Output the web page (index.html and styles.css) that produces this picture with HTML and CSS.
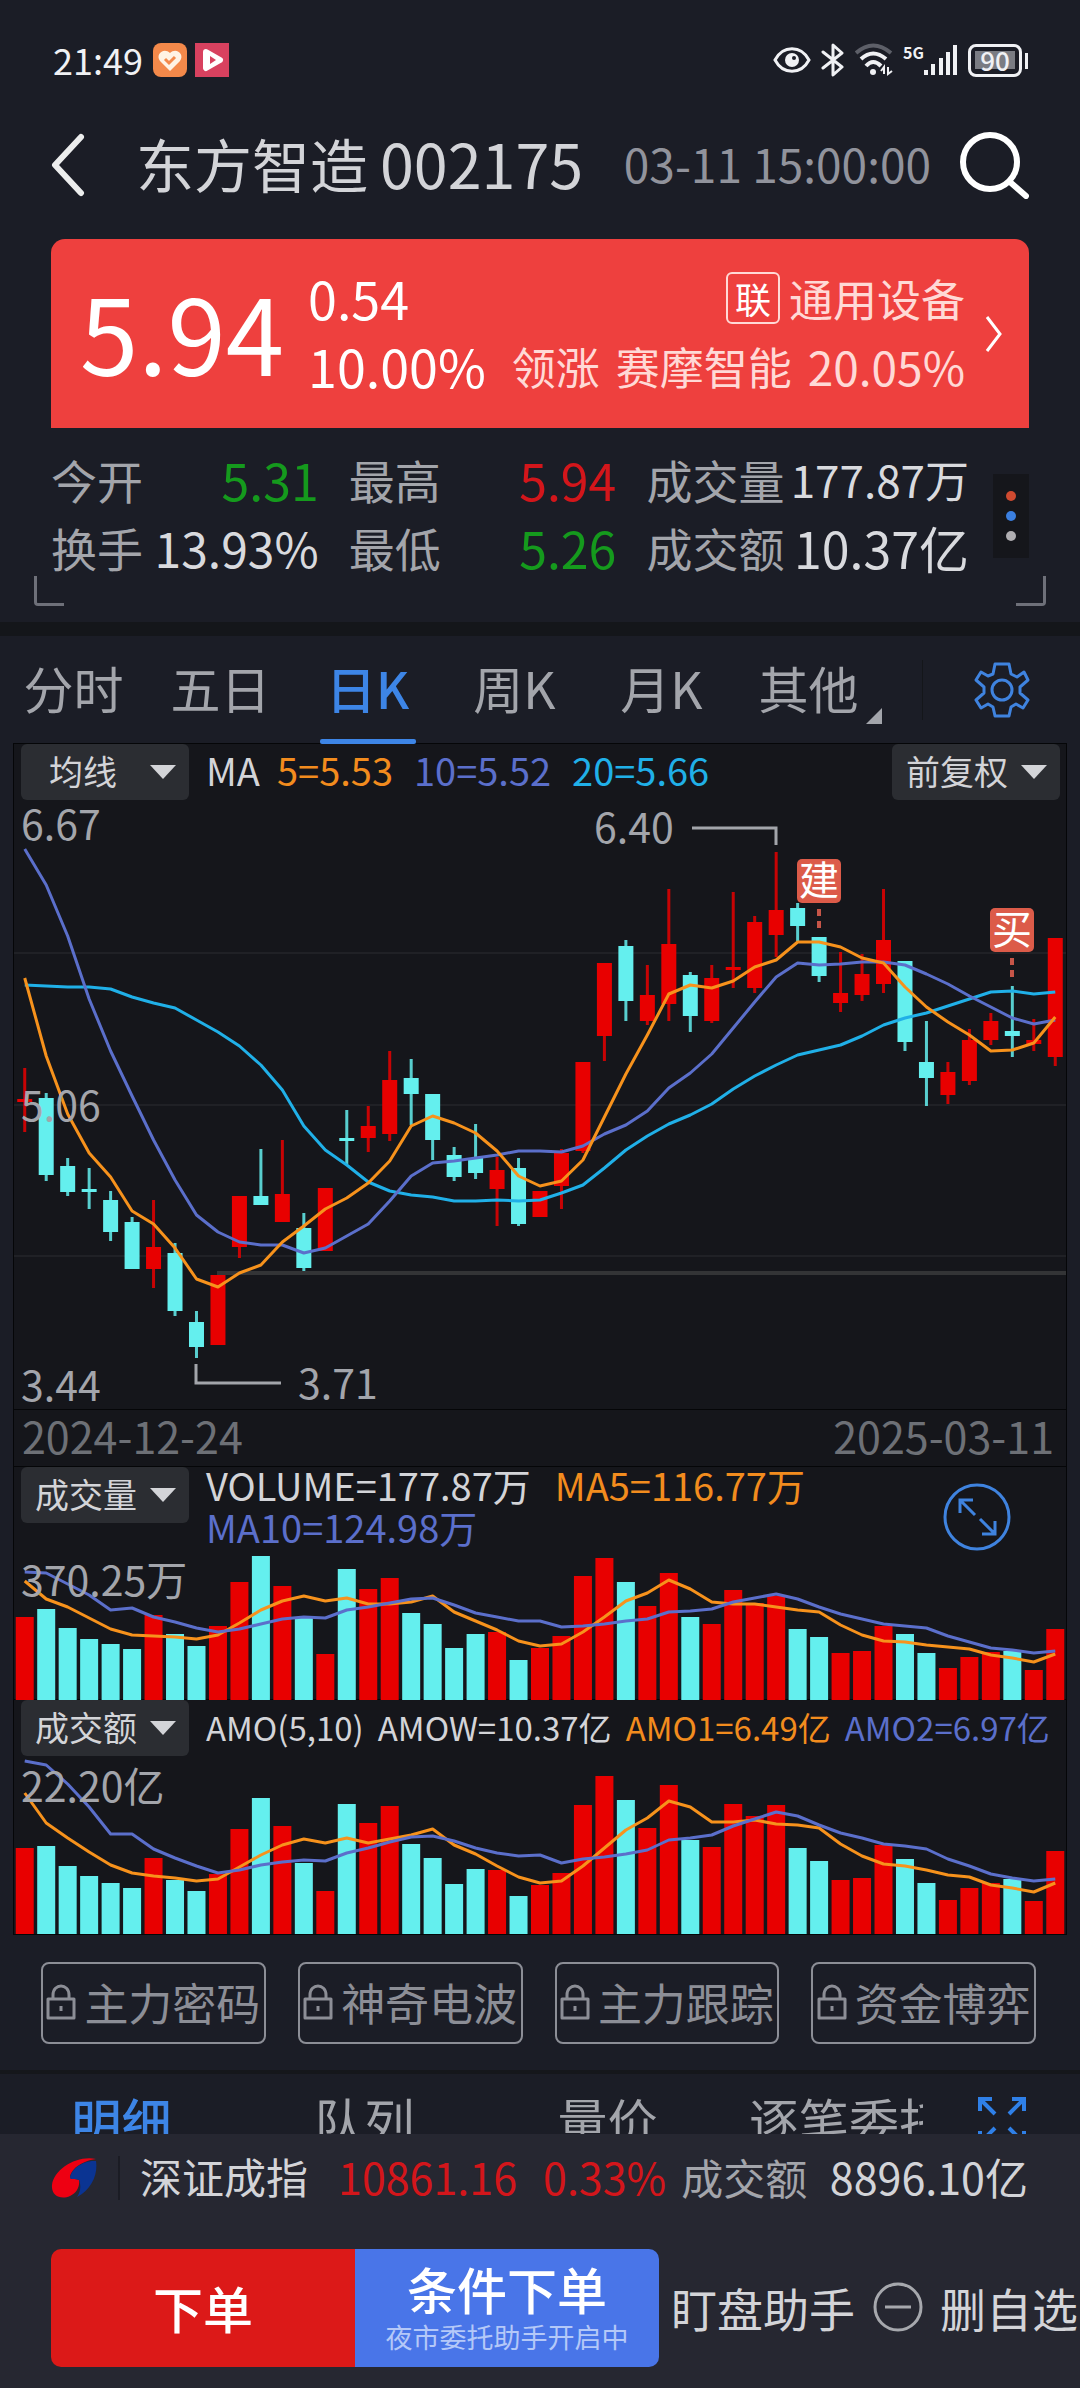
FILE: index.html
```
<!DOCTYPE html>
<html lang="zh-CN">
<head>
<meta charset="UTF-8">
<meta name="viewport" content="width=device-width, initial-scale=1.0">
<title>东方智造 002175</title>
<link rel="stylesheet" href="styles.css">
</head>
<body>

<div class="status-bar">
    <span class="time">21:49</span>
    <svg class="app-icon" width="34" height="34" viewBox="0 0 34 34">
        <rect width="34" height="34" rx="8" fill="#f4894a"/>
        <path d="M17 28 L7 18 C2 11 11 4 17 10 C23 4 32 11 27 18 Z" fill="#fff3e4"/>
        <path d="M12 16 L16 20 L22 14" fill="none" stroke="#f4894a" stroke-width="3"/>
    </svg>
    <svg width="34" height="34" viewBox="0 0 34 34">
        <rect width="34" height="34" fill="#d8415f"/>
        <path d="M11 9 L25 17 L11 25 Z" fill="#fff" stroke="#fff" stroke-width="6" stroke-linejoin="round"/>
        <path d="M15 13 L21 17 L15 21 Z" fill="#d8415f"/>
    </svg>
    <div class="status-right">
        <svg width="38" height="26" viewBox="0 0 38 26">
            <path d="M2 13 C10 -2 28 -2 36 13 C28 28 10 28 2 13 Z" fill="none" stroke="#f0f1f4" stroke-width="3"/>
            <circle cx="19" cy="13" r="7" fill="#f0f1f4"/>
            <circle cx="21" cy="11" r="2" fill="#1b1d26"/>
        </svg>
        <svg width="24" height="34" viewBox="0 0 24 34">
            <path d="M2 9 L21 24 L12 32 V2 L21 10 L2 25" fill="none" stroke="#f0f1f4" stroke-width="3" stroke-linejoin="round" stroke-linecap="round"/>
        </svg>
        <svg width="38" height="34" viewBox="0 0 38 34">
            <g fill="none" stroke-width="4">
                <path d="M1 10 Q18 -5 36 10" stroke="#5d5f68"/>
                <path d="M6 16 Q18 5 31 16" stroke="#f0f1f4"/>
                <path d="M11 23 Q18 15 26 23" stroke="#f0f1f4"/>
            </g>
            <circle cx="18" cy="29" r="3" fill="#f0f1f4"/>
            <path d="M29 31 V24 L26 28 M33 24 V31 L37 28" fill="none" stroke="#f0f1f4" stroke-width="2"/>
        </svg>
        <div class="signal">
            <span>5G</span>
            <svg width="34" height="32" viewBox="0 0 34 32">
                <path d="M2 26 V31 M9 20 V31 M17 14 V31 M24 8 V31 M31 1 V31" stroke="#f0f1f4" stroke-width="4"/>
            </svg>
        </div>
        <div class="battery"><span>90</span></div>
    </div>
</div>

<main class="content">
    <header class="header">
        <button class="icon-button" aria-label="返回">
            <svg width="36" height="64" viewBox="0 0 36 64"><path d="M31 4 L5 32 L31 60" fill="none" stroke="#eceded" stroke-width="6" stroke-linecap="round" stroke-linejoin="round"/></svg>
        </button>
        <h1>东方智造 <span>002175</span></h1>
        <time>03-11 15:00:00</time>
        <button class="icon-button" aria-label="搜索">
            <svg width="70" height="68" viewBox="0 0 70 68"><circle cx="31" cy="31" r="27" fill="none" stroke="#fff" stroke-width="6"/><path d="M51 51 L67 65" stroke="#fff" stroke-width="6" stroke-linecap="round"/></svg>
        </button>
    </header>

    <section class="price-card">
        <strong>5.94</strong>
        <div class="change">
            <div>0.54</div>
            <div>10.00%</div>
        </div>
        <a class="sector" href="#">
            <span class="sector-row"><span class="badge">联</span>通用设备</span>
            <span class="sector-row leader"><span>领涨</span><span>赛摩智能</span><span class="leader-change">20.05%</span></span>
        </a>
        <svg width="18" height="38" viewBox="0 0 18 38"><path d="M2 2 L15 19 L2 36" fill="none" stroke="#fff" stroke-width="3"/></svg>
    </section>

    <section class="stats">
        <div class="stat-col">
            <div class="stat"><span>今开</span><b class="green large">5.31</b></div>
            <div class="stat"><span>换手</span><b>13.93%</b></div>
        </div>
        <div class="stat-col">
            <div class="stat"><span>最高</span><b class="red large">5.94</b></div>
            <div class="stat"><span>最低</span><b class="green large">5.26</b></div>
        </div>
        <div class="stat-col wide">
            <div class="stat"><span>成交量</span><b class="small">177.87万</b></div>
            <div class="stat"><span>成交额</span><b class="large">10.37亿</b></div>
        </div>
        <button class="dots" aria-label="更多"><i></i><i></i><i></i></button>
    </section>
    <div class="corners"><i></i><i></i></div>

    <nav class="tabs">
        <button>分时</button>
        <button>五日</button>
        <button class="active">日K</button>
        <button>周K</button>
        <button>月K</button>
        <button class="more">其他</button>
        <div class="settings">
            <button class="icon-button" aria-label="设置">
                <svg width="56" height="56" viewBox="-28 -28 56 56" fill="none" stroke="#3f83df" stroke-width="3" stroke-linejoin="round">
                    <path d="M-7 -26 H7 L9 -16 L15 -13 L22 -18 L26 -10 L18 -3 V3 L26 10 L21 18 L14 14 L9 17 L7 26 H-7 L-9 17 L-14 14 L-21 18 L-26 10 L-18 3 V-3 L-26 -10 L-21 -18 L-14 -14 L-9 -16 Z"/>
                    <circle r="10"/>
                </svg>
            </button>
        </div>
    </nav>

    <section class="charts">
        <div class="panel">
            <div class="panel-head">
                <label class="select short"><select aria-label="指标"><option>均线</option></select></label>
                <div class="legend"><span>MA</span><span class="orange">5=5.53</span><span class="violet ma10">10=5.52</span><span class="cyan">20=5.66</span></div>
                <label class="select"><select aria-label="复权"><option>前复权</option></select></label>
            </div>
            <svg id="priceChart" class="chart" viewBox="0 0 1052 607"></svg>
        </div>
        <div class="dates"><span>2024-12-24</span><span>2025-03-11</span></div>
        <div class="panel">
            <div class="panel-head tall">
                <label class="select"><select aria-label="副图一"><option>成交量</option></select></label>
                <div class="legend two-lines"><span>VOLUME=177.87万</span><span class="orange">MA5=116.77万</span><span class="violet">MA10=124.98万</span></div>
                <button class="icon-button zoom" aria-label="放大">
                    <svg width="70" height="70" viewBox="0 0 70 70" fill="none" stroke="#3f83df" stroke-width="3">
                        <circle cx="35" cy="35" r="32"/>
                        <path d="M33 33 L18 18 M18 31 V18 H31 M38 37 L53 52 M53 39 V52 H40"/>
                    </svg>
                </button>
            </div>
            <svg id="volumeChart" class="chart" viewBox="0 0 1052 154"></svg>
        </div>
        <div class="panel">
            <div class="panel-head">
                <label class="select"><select aria-label="副图二"><option>成交额</option></select></label>
                <div class="legend amo"><span>AMO(5,10)</span><span>AMOW=10.37亿</span><span class="orange">AMO1=6.49亿</span><span class="violet">AMO2=6.97亿</span></div>
            </div>
            <svg id="amountChart" class="chart" viewBox="0 0 1052 176"></svg>
        </div>
    </section>

    <svg class="defs" width="0" height="0">
        <symbol id="lock" viewBox="0 0 30 36">
            <path d="M2 15 H28 V34 H2 Z M7 15 V11 C7 -1 23 -1 23 11 V15 M15 22 V27" fill="none" stroke="#8c8e96" stroke-width="3" stroke-linejoin="round"/>
        </symbol>
    </svg>
    <section class="locked">
        <button><svg width="30" height="36"><use href="#lock"/></svg>主力密码</button>
        <button><svg width="30" height="36"><use href="#lock"/></svg>神奇电波</button>
        <button><svg width="30" height="36"><use href="#lock"/></svg>主力跟踪</button>
        <button><svg width="30" height="36"><use href="#lock"/></svg>资金博弈</button>
    </section>

    <nav class="detail-tabs">
        <button class="active">明细</button>
        <button>队列</button>
        <button>量价</button>
        <button class="last">逐笔委托</button>
        <div class="expand">
            <svg width="48" height="48" viewBox="0 0 48 48" fill="none" stroke="#2f80e8" stroke-width="4">
                <path d="M2 14 V2 H14 M2 2 L17 17 M34 2 H46 V14 M46 2 L31 17 M2 34 V46 H14 M2 46 L17 31 M34 46 H46 V34 M46 46 L31 31"/>
            </svg>
        </div>
    </nav>
</main>

<footer class="footer">
    <div class="index-row">
        <svg width="46" height="42" viewBox="0 0 46 42">
            <path d="M45 2 C26 -2 3 12 1 28 C0 39 10 43 19 39 C26 36 29 29 28 23 C24 21 21 23 19 21 C19 13 30 4 45 2 Z" fill="#ee0012"/>
            <path d="M45 4 C47 17 41 32 26 40 C30 34 30 28 28 23 C24 21 21 23 19 21 C20 12 32 3 45 4 Z" fill="#0b3492"/>
        </svg>
        <span class="index-name">深证成指</span>
        <span class="red">10861.16</span>
        <span class="red percent">0.33%</span>
        <span class="muted">成交额</span>
        <span class="turnover">8896.10亿</span>
    </div>
    <div class="actions">
        <button class="order">下单</button>
        <button class="condition">条件下单<small>夜市委托助手开启中</small></button>
        <button class="plain watch">盯盘助手</button>
        <button class="plain remove">
            <svg width="50" height="50" viewBox="0 0 50 50" fill="none" stroke="#a6a8ad" stroke-width="3"><circle cx="25" cy="25" r="23"/><path d="M12 25 H38"/></svg>
            删自选
        </button>
    </div>
</footer>

<script src="charts.js"></script>
</body>
</html>
```
FILE: styles.css
```
* {
    box-sizing: border-box;
}
body {
    display: flex;
    flex-direction: column;
    height: 100vh;
    margin: 0;
    overflow: hidden;
    background-color: #1b1d26;
    color: #d3d4d8;
    font-family: "Noto Sans CJK SC", "Noto Sans", sans-serif;
}
button,
select {
    margin: 0;
    padding: 0;
    border: 0;
    background: none;
    color: inherit;
    font: inherit;
    white-space: nowrap;
    cursor: pointer;
}
svg {
    display: block;
    flex-shrink: 0;
}
.icon-button {
    flex-shrink: 0;
}
.red {
    color: #d3161b;
}
.green {
    color: #159a1d;
}
.orange {
    color: #f28c1e;
}
.violet {
    color: #5b6fcb;
}
.cyan {
    color: #20b0e8;
}
.muted {
    color: #a3a5ab;
}

/* status bar */
.status-bar {
    display: flex;
    flex-shrink: 0;
    align-items: center;
    gap: 8px;
    height: 120px;
    padding: 0 52px 0 53px;
    color: #f0f1f4;
}
.time {
    padding: 0 2px 3px 0;
    font-size: 36px;
    line-height: 40px;
}
.status-right {
    display: flex;
    align-items: center;
    gap: 10px;
    margin-left: auto;
}
.signal {
    display: flex;
    align-items: flex-start;
}
.signal span {
    font-size: 16px;
    font-weight: bold;
    line-height: 16px;
}
.battery {
    position: relative;
    width: 54px;
    height: 33px;
    padding: 4px;
    margin-right: 6px;
    border: 3px solid #f0f1f4;
    border-radius: 8px;
}
.battery::after {
    content: '';
    position: absolute;
    top: 6px;
    right: -9px;
    width: 3px;
    height: 16px;
    background-color: #f0f1f4;
}
.battery span {
    display: block;
    background-color: #7a7c83;
    font-size: 26px;
    font-weight: 500;
    line-height: 18px;
    text-align: center;
}

.content {
    flex: 1;
    min-height: 0;
    overflow: hidden;
}

/* title */
.header {
    display: flex;
    align-items: center;
    height: 90px;
    margin-bottom: 29px;
    padding: 0 51px 0 50px;
}
.header h1 {
    display: flex;
    gap: 12px;
    margin: 0 auto 0 50px;
    padding-bottom: 5px;
    font-size: 58px;
    font-weight: normal;
    line-height: 80px;
    white-space: nowrap;
}
.header h1 span {
    font-size: 61px;
}
.header time {
    margin-right: 28px;
    padding-bottom: 4px;
    color: #91939c;
    font-size: 46px;
    line-height: 80px;
    white-space: nowrap;
}

/* price */
.price-card {
    display: flex;
    align-items: center;
    height: 189px;
    margin: 0 51px 20px;
    padding: 0 26px 0 29px;
    border-radius: 14px 14px 0 0;
    background-color: #ee403e;
    color: #fff;
    white-space: nowrap;
}
.price-card strong {
    margin-right: 24px;
    padding-bottom: 8px;
    font-size: 105px;
    font-weight: normal;
    line-height: 136px;
}
.change {
    padding-bottom: 4px;
    font-size: 52px;
    line-height: 68px;
}
.sector {
    margin: 0 20px 0 auto;
    padding-bottom: 3px;
    color: #ffd9d6;
    font-size: 44px;
    line-height: 68px;
    text-decoration: none;
}
.sector-row {
    display: flex;
    align-items: center;
    justify-content: flex-end;
    gap: 9px;
}
.leader {
    gap: 16px;
}
.leader-change {
    font-size: 46px;
}
.badge {
    padding: 0 7px;
    border: 2px solid #ffd9d6;
    border-radius: 6px;
    color: #fff;
    font-size: 36px;
    line-height: 48px;
}

/* day stats */
.stats {
    display: flex;
    align-items: center;
    gap: 30px;
    padding: 0 51px;
}
.stat-col {
    flex: 268 1 0;
}
.stat-col.wide {
    flex-grow: 323;
}
.stat {
    display: flex;
    align-items: center;
    justify-content: space-between;
    height: 68px;
    padding-bottom: 7px;
    color: #a3a5ab;
    font-size: 46px;
    line-height: 60px;
    white-space: nowrap;
}
.stat b {
    color: #d9dade;
    font-size: 48px;
    font-weight: normal;
}
.stat .large {
    font-size: 50px;
}
.stat .small {
    font-size: 44px;
}
.stat .red {
    color: #d3161b;
}
.stat .green {
    color: #159a1d;
}
.dots {
    display: flex;
    flex-direction: column;
    align-items: center;
    justify-content: center;
    gap: 10px;
    width: 36px;
    height: 84px;
    margin-left: -6px;
    background-color: #15161b;
}
.dots i {
    width: 10px;
    height: 10px;
    border-radius: 5px;
    background-color: #b0aeb2;
}
.dots i:nth-child(1) {
    background-color: #cf4a30;
}
.dots i:nth-child(2) {
    background-color: #3b7fe0;
}
.corners {
    display: flex;
    justify-content: space-between;
    height: 38px;
    padding: 0 34px;
    margin-top: -8px;
}
.corners i {
    width: 30px;
    height: 30px;
    border: 3px solid #6e7079;
    border-top: 0;
    border-right: 0;
    border-radius: 0 0 0 4px;
}
.corners i:last-child {
    border-right: 3px solid #6e7079;
    border-left: 0;
    border-radius: 0 0 4px 0;
}

/* period tabs */
.tabs {
    display: grid;
    grid-template-columns: repeat(6, 147fr) 198fr;
    height: 122px;
    margin-top: 8px;
    border-top: 14px solid #14161a;
    color: #a3a5ab;
    font-size: 50px;
}
.tabs > button {
    position: relative;
    padding-bottom: 6px;
}
.tabs .active,
.detail-tabs .active {
    color: #3d85e6;
    font-weight: 500;
}
.tabs .active::after {
    content: '';
    position: absolute;
    bottom: 0;
    left: 50%;
    width: 96px;
    height: 5px;
    margin-left: -48px;
    border-radius: 2px;
    background-color: #3d85e6;
}
.tabs .more::after {
    content: '';
    position: absolute;
    right: 0;
    bottom: 20px;
    border-bottom: 16px solid #a3a5ab;
    border-left: 16px solid transparent;
}
.settings {
    display: flex;
    align-items: center;
    justify-content: flex-end;
    margin: 24px 0 24px 40px;
    padding-right: 50px;
    border-left: 1px solid #14161a;
}

/* charts */
.charts {
    margin: 0 14px;
    background-color: #15161b;
    box-shadow: 0 0 0 1px #050608;
}
.panel-head {
    display: flex;
    align-items: flex-start;
    height: 58px;
    padding: 0 6px 0 7px;
}
.panel-head.tall {
    height: 79px;
}
.select {
    position: relative;
    flex-shrink: 0;
    width: 168px;
    height: 56px;
    border-radius: 6px;
    background-color: #2b2d32;
}
.select::after {
    content: '';
    position: absolute;
    top: 21px;
    right: 13px;
    border: solid transparent;
    border-width: 14px 13px 0;
    border-top-color: #d3d4d8;
    pointer-events: none;
}
.select select {
    width: 100%;
    height: 56px;
    padding: 0 0 3px 14px;
    appearance: none;
    font-size: 34px;
}
.select.short select {
    padding-left: 28px;
}
.legend {
    display: flex;
    flex: 1;
    gap: 17px;
    padding-left: 17px;
    font-size: 38px;
    line-height: 52px;
    white-space: nowrap;
}
.ma10 {
    margin: 0 4px;
}
.legend.two-lines {
    flex-wrap: wrap;
    gap: 0 24px;
    margin-top: -3px;
    line-height: 42px;
}
.legend.amo {
    gap: 14px;
    font-size: 33px;
    line-height: 54px;
}
.zoom {
    margin: 15px 48px 0 0;
}
.chart {
    width: 100%;
    height: auto;
    overflow: visible;
}
.chart text {
    fill: #a3a5ab;
    font-size: 41px;
}
.chart .tag {
    fill: #fff;
    font-size: 40px;
}
.chart .up {
    fill: #e80000;
}
.chart .down {
    fill: #64efee;
}
.chart .line {
    fill: none;
    stroke-width: 3;
    stroke-linejoin: round;
}
.chart .grid {
    stroke: #202126;
    stroke-width: 2;
}
.dates {
    display: flex;
    align-items: center;
    justify-content: space-between;
    height: 58px;
    padding: 0 12px 6px 8px;
    border: solid #050608;
    border-width: 1px 0;
    color: #6d7076;
    font-size: 43px;
    line-height: 50px;
}
.panel + .panel {
    box-shadow: 0 -1px #050608;
}

/* paid indicators */
.locked {
    display: grid;
    grid-template-columns: repeat(4, 1fr);
    gap: 32px;
    padding: 28px 44px 26px 41px;
}
.locked button {
    display: flex;
    align-items: center;
    justify-content: center;
    gap: 8px;
    height: 82px;
    padding-bottom: 2px;
    border: 2px solid #8c8e96;
    border-radius: 8px;
    color: #8c8e96;
    font-size: 44px;
}

/* detail tabs */
.detail-tabs {
    display: grid;
    grid-template-columns: repeat(3, 243fr) 194fr 157fr;
    height: 98px;
    border-top: 4px solid #15171b;
    color: #a3a5ab;
    font-size: 50px;
}
.detail-tabs button {
    min-width: 0;
    padding-bottom: 5px;
}
.detail-tabs .last {
    padding-left: 20px;
    overflow: hidden;
    text-align: left;
}
.expand {
    display: flex;
    align-items: center;
    justify-content: flex-end;
    padding-right: 54px;
}

/* bottom bar */
.footer {
    flex-shrink: 0;
    background-color: #262731;
    white-space: nowrap;
}
.index-row {
    display: flex;
    align-items: center;
    height: 88px;
    padding: 0 52px 0 51px;
    font-size: 43px;
}
.index-row span {
    padding-bottom: 4px;
}
.index-row .index-name {
    margin: 0 30px 0 21px;
    padding-left: 20px;
    border-left: 2px solid #1b1c24;
    font-size: 42px;
    line-height: 40px;
}
.percent {
    margin: 0 15px 0 26px;
}
.index-row .muted {
    font-size: 42px;
}
.turnover {
    margin-left: auto;
}
.actions {
    display: flex;
    padding: 27px 2px 21px 51px;
}
.actions button {
    height: 118px;
    padding-bottom: 3px;
    font-size: 50px;
}
.order,
.condition {
    flex: 1;
    color: #fff;
    font-weight: 500;
}
.order {
    border-radius: 10px 0 0 10px;
    background-color: #dc1918;
}
.condition {
    border-radius: 0 10px 10px 0;
    background-color: #4975e8;
    line-height: 60px;
}
.condition small {
    display: block;
    color: #b4c8f8;
    font-size: 27px;
    font-weight: normal;
    line-height: 38px;
}
.actions .plain {
    font-size: 46px;
}
.watch {
    padding: 0 18px 0 12px;
}
.remove {
    display: flex;
    align-items: center;
    gap: 17px;
}
```
FILE: charts.js
```
var WIDTH = 1052;
var ORANGE = "#f7921c";
var VIOLET = "#5b6fcb";
var CYAN = "#20b0e8";

// [high, body top, body bottom, low], measured down from the top of the plot
var candles = [
    [266,297,300,330],[291,296,373,379],[356,364,390,394],[366,387,390,407],[389,398,430,439],
    [415,420,467,467],[398,445,467,486],[441,451,509,514],[509,520,545,556],[473,473,543,543],
    [394,394,445,456],[347,394,403,403],[338,392,420,420],[411,426,466,469],[386,386,449,449],
    [308,336,339,362],[304,324,336,350],[249,278,332,339],[257,276,292,323],[292,292,338,358],
    [345,353,375,379],[322,356,371,377],[355,368,387,424],[356,366,422,424],[389,389,415,415],
    [347,351,384,407],[260,260,349,351],[161,161,234,259],[138,144,199,219],[163,193,219,223],
    [87,142,202,219],[170,173,214,230],[163,176,219,221],[90,165,168,186],[114,120,186,191],
    [50,108,133,155],[101,106,124,139],[135,135,174,180],[150,191,201,210],[152,172,193,199],
    [87,138,182,191],[159,159,240,249],[219,260,276,304],[260,270,293,302],[227,238,279,283],
    [211,219,238,243],[184,229,234,255],[217,238,242,249],[136,136,255,264]
];
var falling = [1,2,3,4,5,7,8,11,13,15,18,19,20,21,23,28,31,36,37,41,42,46];

var ma5 = [176,254,312,351,375,409,422,446,477,485,471,463,440,424,407,396,381,359,324,314,321,331,349,374,384,379,358,315,272,233,192,183,186,179,165,158,140,140,145,156,161,185,205,220,233,249,248,241,215];
var ma10 = [47,83,134,197,249,294,338,378,413,430,440,443,443,451,446,434,422,399,374,361,359,356,353,349,349,350,344,332,323,309,286,271,252,226,200,175,161,163,162,160,160,163,172,182,194,205,216,222,218];
var ma20 = [183,184,185,185,187,195,201,206,218,230,244,263,288,324,348,363,380,389,393,395,399,399,398,399,398,391,383,366,348,334,322,313,302,287,274,263,253,248,243,234,223,216,211,204,197,190,189,192,190];

// bar heights and averages, measured up from the base line
var volume = {
    bars: [83,91,72,61,56,51,85,66,54,74,118,144,114,82,46,131,111,122,87,76,52,66,68,40,52,64,124,142,118,94,127,83,76,110,97,104,71,63,47,49,74,66,47,32,43,48,49,30,71],
    ma5: [119,101,93,82,71,65,64,63,61,65,77,90,99,104,99,102,96,96,98,104,88,79,70,59,54,56,68,83,99,107,120,111,98,96,96,93,90,88,75,65,59,58,55,53,51,45,42,38,46],
    ma10: [128,127,116,105,90,92,83,78,72,68,71,76,81,83,82,90,93,97,101,102,95,87,83,79,79,73,74,76,79,81,88,89,91,98,102,106,101,93,86,81,76,74,72,64,58,52,50,47,49]
};
var amount = {
    bars: [86,88,68,58,51,46,76,54,43,60,105,136,108,71,43,130,111,128,90,76,50,65,64,38,49,61,129,158,134,106,149,94,87,130,118,129,86,73,54,56,89,75,51,34,46,51,55,33,83],
    ma5: [141,111,96,82,69,61,58,56,53,55,67,79,89,95,91,96,91,95,99,105,89,80,68,57,51,53,68,86,104,116,133,127,112,112,114,110,109,106,90,78,70,68,64,59,57,49,46,42,51],
    ma10: [173,169,150,127,100,100,85,76,68,61,64,69,72,74,73,81,86,92,97,98,93,86,81,78,79,71,75,77,80,84,94,96,99,108,115,122,118,109,101,96,90,88,85,75,68,60,56,53,55]
};

function centerX(i) {
    return (i + 0.5) * WIDTH / candles.length;
}

function rect(i, y, width, height, opacity) {
    var cls = falling.indexOf(i) >= 0 ? "down" : "up";
    return '<rect class="' + cls + '" x="' + (centerX(i) - width / 2) + '" y="' + y + '" width="' + width + '" height="' + height + '" opacity="' + opacity + '"/>';
}

function line(values, color) {
    var points = values.map(function(y, i) {
        return centerX(i) + "," + y;
    });
    return '<polyline class="line" stroke="' + color + '" points="' + points.join(" ") + '"/>';
}

function text(x, y, value, cls) {
    return '<text class="' + (cls || "") + '" x="' + x + '" y="' + y + '">' + value + '</text>';
}

function tag(x, y, value) {
    return '<rect x="' + x + '" y="' + y + '" width="44" height="44" rx="5" fill="#dc5b49"/>' +
        text(x + 2, y + 36, value, "tag") +
        '<path d="M' + (x + 22) + ' ' + (y + 50) + 'v24" stroke="#c65548" stroke-width="4" stroke-dasharray="7 5"/>';
}

function drawPrice() {
    var out = "";
    [151, 303, 454].forEach(function(y) {
        out += '<path class="grid" d="M0 ' + y + 'H' + WIDTH + '"/>';
    });
    out += '<path d="M203 471H' + WIDTH + '" stroke="#333436" stroke-width="4"/>';
    candles.forEach(function(c, i) {
        out += rect(i, c[0], 3, c[3] - c[0], 0.85);
        out += rect(i, c[1], 15, c[2] - c[1], 1);
    });
    out += line(ma20, CYAN) + line(ma10, VIOLET) + line(ma5, ORANGE);
    out += '<path d="M678 26H762V43M182 562V581H267" fill="none" stroke="#a3a5ab" stroke-width="3"/>';
    out += text(580, 41, "6.40") + text(284, 597, "3.71");
    out += text(7, 38, "6.67") + text(7, 319, "5.06") + text(7, 599, "3.44");
    out += tag(783, 57, "建") + tag(976, 106, "买");
    document.getElementById("priceChart").innerHTML = out;
}

function drawBars(id, data, height, label, labelY) {
    var out = "";
    data.bars.forEach(function(h, i) {
        out += rect(i, height - h, 18, h, 1);
    });
    function flip(h) {
        return height - h;
    }
    out += line(data.ma5.map(flip), ORANGE) + line(data.ma10.map(flip), VIOLET);
    out += text(7, labelY, label);
    document.getElementById(id).innerHTML = out;
}

drawPrice();
drawBars("volumeChart", volume, 154, "370.25万", 50);
drawBars("amountChart", amount, 176, "22.20亿", 44);
```
